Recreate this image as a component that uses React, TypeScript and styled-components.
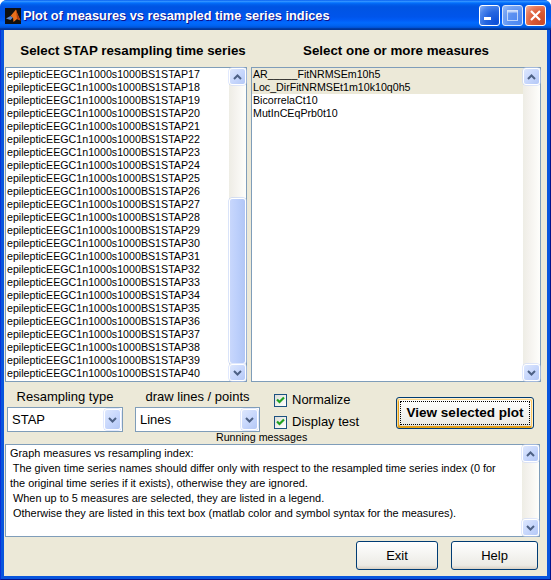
import React from 'react';
import styled, { createGlobalStyle } from 'styled-components';

const FONT = `"Liberation Sans", Arial, sans-serif`;

const Global = createGlobalStyle`
  html, body { margin: 0; padding: 0; background: #ffffff; }
  body { font-family: ${FONT}; }
  * { box-sizing: border-box; }
`;

const Win = styled.div`
  width: 551px;
  height: 580px;
  display: flex;
  flex-direction: column;
  border-radius: 7px 7px 0 0;
  overflow: hidden;
  background: #0855dd;
`;

const TitleBar = styled.div`
  height: 30px;
  flex: none;
  display: flex;
  align-items: center;
  padding: 1px 5px 0 5px;
  background: linear-gradient(180deg, #0058ee 0%, #3593ff 4%, #288eff 6%, #127dff 8%, #036ffc 10%, #0262ee 14%, #0057e5 20%, #0054e3 24%, #0055eb 56%, #005bf5 66%, #026afe 76%, #0062ef 86%, #0052d6 92%, #0040ab 94%, #003092 100%);
`;

const AppIcon = styled.svg`
  flex: none;
  margin-right: 2px;
`;

const TitleText = styled.div`
  flex: 1;
  color: #ffffff;
  font: bold 12.8px/16px ${FONT};
  text-shadow: 1px 1px #0f1089;
  white-space: nowrap;
`;

const TitleControls = styled.div`
  display: flex;
  gap: 2px;
  margin-top: -1px;
`;

const CapButton = styled.div<{ $kind: 'min' | 'max' | 'close' }>`
  width: 21px;
  height: 21px;
  border: 1px solid #ffffff;
  border-radius: 3px;
  display: flex;
  align-items: center;
  justify-content: center;
  background: ${p =>
    p.$kind === 'close'
      ? 'radial-gradient(circle at 85% 85%, #cc4b2a 0%, #dc5a34 45%, #e98062 75%, #f4b7a2 100%)'
      : p.$kind === 'max'
      ? 'radial-gradient(circle at 85% 85%, #5b8ff0 0%, #6d9cf2 45%, #8db3f6 75%, #b9d0fa 100%)'
      : 'radial-gradient(circle at 85% 85%, #0c4fd8 0%, #2465e0 45%, #4c86ec 75%, #8fb4f7 100%)'};
  opacity: ${p => (p.$kind === 'max' ? 0.85 : 1)};
`;

const Frame = styled.div`
  flex: 1;
  display: flex;
  padding: 0 4px 4px 4px;
  border-left: 1px solid #0831d9;
  border-right: 1px solid #00138c;
  border-bottom: 1px solid #00138c;
  background: #0855dd;
`;

const Content = styled.div`
  flex: 1;
  margin: 0 -1px -1px -1px;
  background: #ece9d8;
  display: flex;
  flex-direction: column;
  padding-left: 1px;
`;

const Lists = styled.div`
  display: grid;
  grid-template-columns: 242px 290px;
  column-gap: 4px;
`;

const Col = styled.div`
  display: flex;
  flex-direction: column;
`;

const Heading = styled.div<{ $shift?: number }>`
  height: 37px;
  padding-bottom: 8px;
  padding-left: ${p => p.$shift ?? 0}px;
  display: flex;
  align-items: flex-end;
  justify-content: center;
  font: bold 13.33px/16px ${FONT};
  color: #000000;
  white-space: nowrap;
`;

const ListBox = styled.div`
  height: 315px;
  border: 1px solid #7f9db9;
  background: #ffffff;
  display: flex;
`;

const Items = styled.div`
  flex: 1;
  overflow: hidden;
`;

const Item = styled.div<{ $sel?: boolean }>`
  height: 13px;
  font: 10.67px/13px ${FONT};
  padding-left: 1px;
  white-space: nowrap;
  color: #000000;
  background: ${p => (p.$sel ? '#ece9d8' : 'transparent')};
`;

const VScroll = styled.div`
  width: 17px;
  flex: none;
  display: flex;
  flex-direction: column;
  background: linear-gradient(90deg, #eeede5 0%, #f3f1ec 30%, #fefefb 100%);
`;

const ArrowBtn = styled.div`
  width: 17px;
  height: 17px;
  flex: none;
  border: 1px solid #ffffff;
  border-radius: 3px;
  display: flex;
  align-items: center;
  justify-content: center;
  background: linear-gradient(135deg, #dde7fd 0%, #c6d6fc 55%, #b4c8f6 100%);
  box-shadow: 0 0 0 0.5px #c3d3fd;
`;

const Track = styled.div`
  flex: 1;
  display: flex;
  flex-direction: column;
  justify-content: flex-end;
`;

const Thumb = styled.div<{ $h: number }>`
  height: ${p => p.$h}px;
  border: 1px solid #ffffff;
  border-radius: 3px;
  background: linear-gradient(90deg, #c8d7fc 0%, #bccffb 50%, #b1c6f5 100%);
  box-shadow: 0 0 0 0.5px #b6c9f4;
`;

const ControlsRow = styled.div`
  height: 50px;
  display: flex;
  align-items: flex-start;
`;

const Group = styled.div<{ $w: number; $ml: number }>`
  width: ${p => p.$w}px;
  margin-left: ${p => p.$ml}px;
  padding-top: 7px;
  display: flex;
  flex-direction: column;
  align-items: stretch;
`;

const GroupLabel = styled.div`
  height: 16px;
  font: 13px/16px ${FONT};
  text-align: center;
  white-space: nowrap;
  color: #000000;
  margin-bottom: 2px;
`;

const Combo = styled.div`
  height: 25px;
  border: 1px solid #7f9db9;
  background: #ffffff;
  display: flex;
  align-items: stretch;
  padding: 1px;
`;

const ComboText = styled.span`
  flex: 1;
  font: 13px/21px ${FONT};
  padding-left: 3px;
  color: #000000;
`;

const ComboBtn = styled(ArrowBtn)`
  height: auto;
  width: 17px;
`;

const Checks = styled.div`
  width: 122px;
  margin-left: 14px;
  padding-top: 7px;
  display: flex;
  flex-direction: column;
`;

const CheckRow = styled.div`
  height: 22px;
  display: flex;
  align-items: center;
  gap: 5px;
  font: 13px/16px ${FONT};
  color: #000000;
  white-space: nowrap;
`;

const CheckBox = styled.span`
  width: 13px;
  height: 13px;
  flex: none;
  border: 1px solid #1c5180;
  background: linear-gradient(135deg, #dcdcd7 0%, #f3f3ef 60%, #ffffff 100%);
  display: flex;
  align-items: center;
  justify-content: center;
`;

const XPButton = styled.div<{ $w: number; $h: number; $hot?: boolean }>`
  width: ${p => p.$w}px;
  height: ${p => p.$h}px;
  border: 1px solid #003c74;
  border-radius: 3px;
  background: linear-gradient(180deg, #ffffff 0%, #ecebe5 86%, #d8d0c4 100%);
  display: flex;
  align-items: center;
  justify-content: center;
  position: relative;
  font: ${p => (p.$hot ? 'bold 13.5px/16px' : '13px/16px')} ${FONT};
  color: #000000;
  white-space: nowrap;
  box-shadow: ${p =>
    p.$hot
      ? 'inset -1px 1px #fff0cf, inset 1px 2px #fdd889, inset -2px 2px #fbc761, inset 2px -2px #e5a01a'
      : 'none'};
`;

const FocusRing = styled.span`
  position: absolute;
  inset: 3px;
  border: 1px dotted #000000;
  pointer-events: none;
`;

const ViewWrap = styled.div`
  margin-top: 15px;
`;

const Caption = styled.div`
  height: 12px;
  padding-left: 211px;
  font: 10.67px/11px ${FONT};
  color: #000000;
  white-space: nowrap;
`;

const MsgBox = styled.div`
  width: 535px;
  height: 93px;
  border: 1px solid #7f9db9;
  background: #ffffff;
  display: flex;
`;

const MsgText = styled.div`
  flex: 1;
  padding: 1px 0 0 4px;
  overflow: hidden;
`;

const MsgLine = styled.div`
  font: 10.9px/15px ${FONT};
  color: #000000;
  white-space: pre;
`;

const ButtonsRow = styled.div`
  margin-top: 4px;
  display: flex;
  justify-content: flex-end;
  gap: 13px;
  padding-right: 9px;
`;

const Chevron = ({ up }: { up?: boolean }) => (
  <svg width="9" height="6" viewBox="0 0 9 6">
    <polyline
      points={up ? '1,5 4.5,1.5 8,5' : '1,1 4.5,4.5 8,1'}
      fill="none"
      stroke="#4d6185"
      strokeWidth="2"
    />
  </svg>
);

const Scrollbar = ({ thumb }: { thumb?: number }) => (
  <VScroll>
    <ArrowBtn>
      <Chevron up />
    </ArrowBtn>
    <Track>{thumb ? <Thumb $h={thumb} /> : null}</Track>
    <ArrowBtn>
      <Chevron />
    </ArrowBtn>
  </VScroll>
);

const Check = () => (
  <CheckBox>
    <svg width="9" height="8" viewBox="0 0 9 8">
      <polyline points="1,3.5 3.5,6 8,1.5" fill="none" stroke="#21a121" strokeWidth="2.2" />
    </svg>
  </CheckBox>
);

const stapItems = Array.from({ length: 24 }, (_, i) => `epilepticEEGC1n1000s1000BS1STAP${17 + i}`);
const measures = ['AR_____FitNRMSEm10h5', 'Loc_DirFitNRMSEt1m10k10q0h5', 'BicorrelaCt10', 'MutInCEqPrb0t10'];
const messages = [
  'Graph measures vs resampling index:',
  ' The given time series names should differ only with respect to the resampled time series index (0 for',
  'the original time series if it exists), otherwise they are ignored.',
  ' When up to 5 measures are selected, they are listed in a legend.',
  ' Otherwise they are listed in this text box (matlab color and symbol syntax for the measures).',
];

export default function App() {
  return (
    <>
      <Global />
      <Win>
        <TitleBar>
          <AppIcon width="16" height="16" viewBox="0 0 16 16">
            <rect width="16" height="16" fill="#101010" />
            <path d="M1 10.5 L5.5 8 L8 9.5 L5.5 12 Z" fill="#5d86c9" />
            <path d="M5.5 8 L8.5 4.5 L11 1.5 L12.5 6 L15.5 12.5 L12 11 L8.5 14 L8 9.5 Z" fill="#e8701c" />
            <path d="M11 1.5 L12.5 6 L15.5 12.5 L12 11 Z" fill="#b8400f" />
          </AppIcon>
          <TitleText>Plot of measures vs resampled time series indices</TitleText>
          <TitleControls>
            <CapButton $kind="min">
              <svg width="19" height="19" viewBox="0 0 19 19">
                <rect x="4" y="11" width="7" height="3" fill="#ffffff" />
              </svg>
            </CapButton>
            <CapButton $kind="max">
              <svg width="19" height="19" viewBox="0 0 19 19">
                <rect x="4.5" y="4.5" width="10" height="10" fill="none" stroke="#ffffff" strokeWidth="1" opacity="0.8" />
                <rect x="4" y="4" width="11" height="2.5" fill="#ffffff" opacity="0.8" />
              </svg>
            </CapButton>
            <CapButton $kind="close">
              <svg width="19" height="19" viewBox="0 0 19 19">
                <path d="M5 5 L14 14 M14 5 L5 14" stroke="#ffffff" strokeWidth="2.2" />
              </svg>
            </CapButton>
          </TitleControls>
        </TitleBar>
        <Frame>
          <Content>
            <Lists>
              <Col>
                <Heading $shift={14}>Select STAP resampling time series</Heading>
                <ListBox>
                  <Items>
                    {stapItems.map(s => (
                      <Item key={s}>{s}</Item>
                    ))}
                  </Items>
                  <Scrollbar thumb={166} />
                </ListBox>
              </Col>
              <Col>
                <Heading>Select one or more measures</Heading>
                <ListBox>
                  <Items>
                    {measures.map((m, i) => (
                      <Item key={m} $sel={i < 2}>
                        {m}
                      </Item>
                    ))}
                  </Items>
                  <Scrollbar />
                </ListBox>
              </Col>
            </Lists>
            <ControlsRow>
              <Group $w={116} $ml={2}>
                <GroupLabel>Resampling type</GroupLabel>
                <Combo>
                  <ComboText>STAP</ComboText>
                  <ComboBtn>
                    <Chevron />
                  </ComboBtn>
                </Combo>
              </Group>
              <Group $w={125} $ml={12}>
                <GroupLabel>draw lines / points</GroupLabel>
                <Combo>
                  <ComboText>Lines</ComboText>
                  <ComboBtn>
                    <Chevron />
                  </ComboBtn>
                </Combo>
              </Group>
              <Checks>
                <CheckRow>
                  <Check />
                  Normalize
                </CheckRow>
                <CheckRow>
                  <Check />
                  Display test
                </CheckRow>
              </Checks>
              <ViewWrap>
                <XPButton $w={138} $h={32} $hot>
                  View selected plot
                  <FocusRing />
                </XPButton>
              </ViewWrap>
            </ControlsRow>
            <Caption>Running messages</Caption>
            <MsgBox>
              <MsgText>
                {messages.map((m, i) => (
                  <MsgLine key={i}>{m}</MsgLine>
                ))}
              </MsgText>
              <Scrollbar />
            </MsgBox>
            <ButtonsRow>
              <XPButton $w={82} $h={29}>Exit</XPButton>
              <XPButton $w={87} $h={29}>Help</XPButton>
            </ButtonsRow>
          </Content>
        </Frame>
      </Win>
    </>
  );
}
